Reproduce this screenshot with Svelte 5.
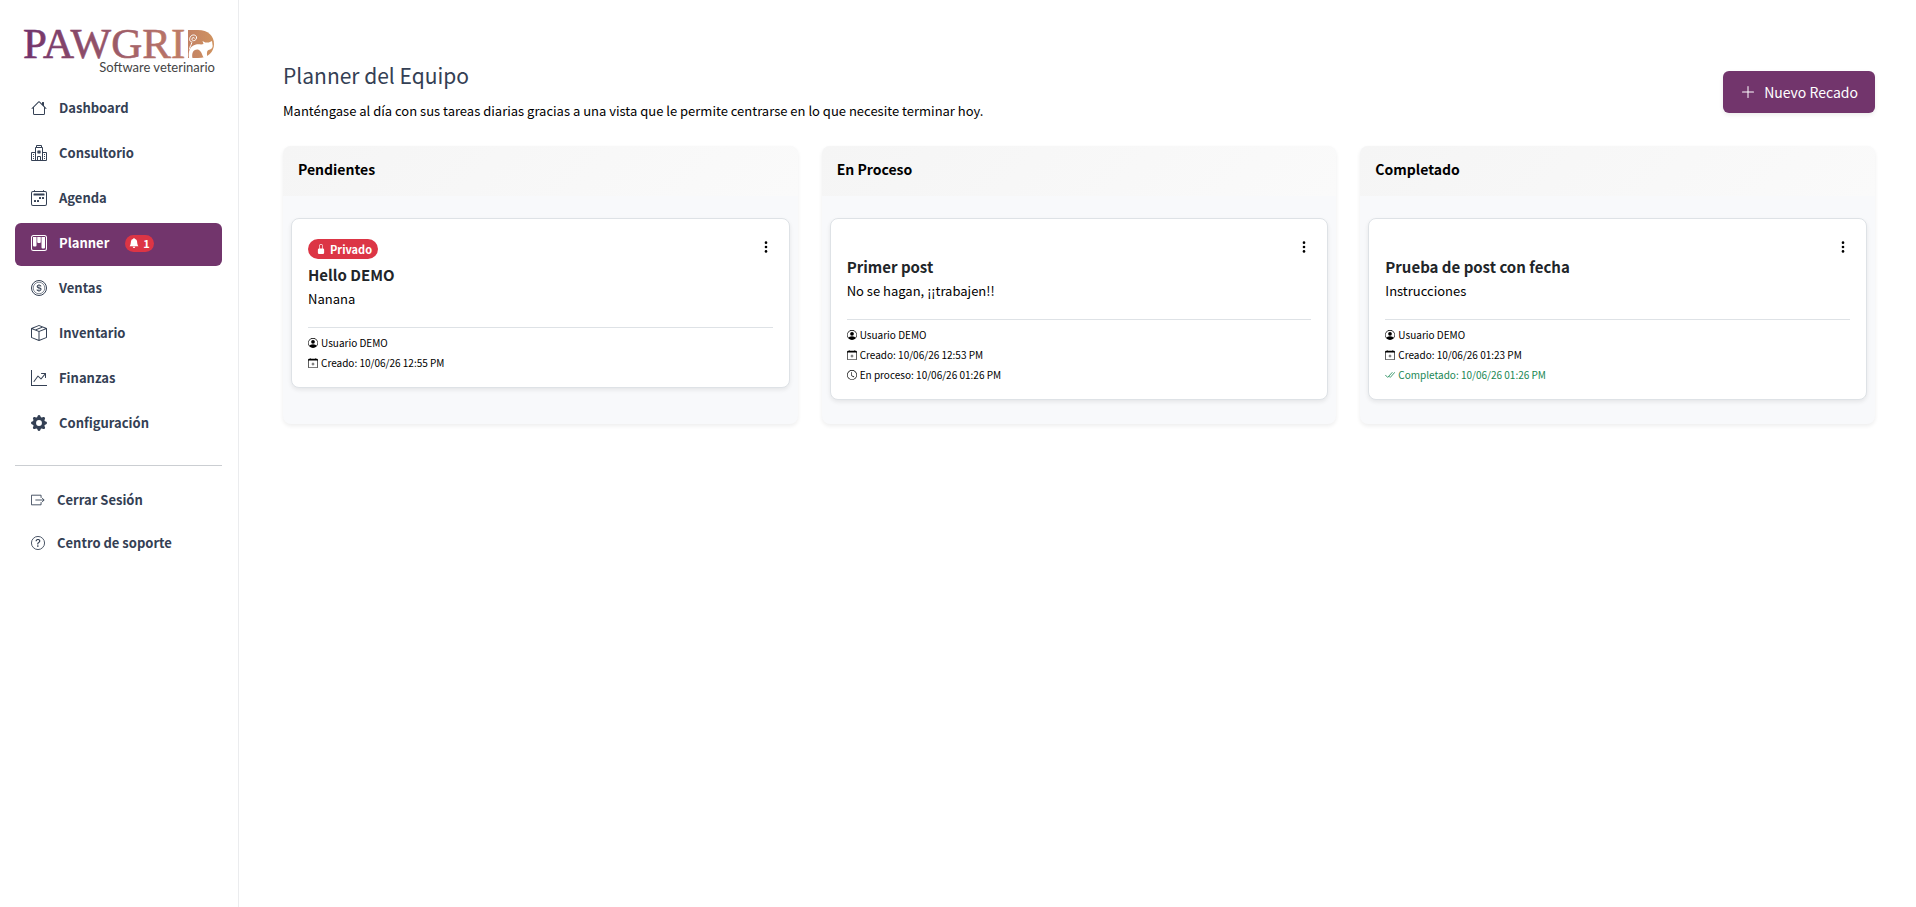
<script>
  const nav = [
    { label: 'Dashboard', icon: 'house' },
    { label: 'Consultorio', icon: 'hospital' },
    { label: 'Agenda', icon: 'week' },
    { label: 'Planner', icon: 'kanban', active: true, alerts: 1 },
    { label: 'Ventas', icon: 'coin' },
    { label: 'Inventario', icon: 'box' },
    { label: 'Finanzas', icon: 'graph' },
    { label: 'Configuración', icon: 'gear' }
  ];

  const links = [
    { label: 'Cerrar Sesión', icon: 'exit' },
    { label: 'Centro de soporte', icon: 'question' }
  ];

  const columns = [
    {
      title: 'Pendientes',
      card: {
        isPrivate: true,
        title: 'Hello DEMO',
        text: 'Nanana',
        meta: [
          { icon: 'person', text: 'Usuario DEMO' },
          { icon: 'plus-cal', text: 'Creado: 10/06/26 12:55 PM' }
        ]
      }
    },
    {
      title: 'En Proceso',
      card: {
        title: 'Primer post',
        text: 'No se hagan, ¡¡trabajen!!',
        meta: [
          { icon: 'person', text: 'Usuario DEMO' },
          { icon: 'plus-cal', text: 'Creado: 10/06/26 12:53 PM' },
          { icon: 'clock', text: 'En proceso: 10/06/26 01:26 PM' }
        ]
      }
    },
    {
      title: 'Completado',
      card: {
        title: 'Prueba de post con fecha',
        text: 'Instrucciones',
        meta: [
          { icon: 'person', text: 'Usuario DEMO' },
          { icon: 'plus-cal', text: 'Creado: 10/06/26 01:23 PM' },
          { icon: 'check', text: 'Completado: 10/06/26 01:26 PM', done: true }
        ]
      }
    }
  ];
</script>

{#snippet icon(name, size)}
  <svg class="icon" width={size} height={size} viewBox="0 0 16 16" fill="currentColor" aria-hidden="true">
    {#if name === 'house'}
      <path d="M8.707 1.5a1 1 0 0 0-1.414 0L.646 8.146a.5.5 0 0 0 .708.708L2 8.207V13.5A1.5 1.5 0 0 0 3.5 15h9a1.5 1.5 0 0 0 1.5-1.5V8.207l.646.647a.5.5 0 0 0 .708-.708L13 5.793V2.5a.5.5 0 0 0-.5-.5h-1a.5.5 0 0 0-.5.5v1.293zM13 7.207V13.5a.5.5 0 0 1-.5.5h-9a.5.5 0 0 1-.5-.5V7.207l5-5z" />
    {:else if name === 'hospital'}
      <path d="M8.5 5.034v1.1l.953-.55.5.867L9 7l.953.55-.5.866-.953-.55v1.1h-1v-1.1l-.953.55-.5-.866L7 7l-.953-.55.5-.866.953.55v-1.1zM13.25 9a.25.25 0 0 0-.25.25v.5c0 .138.112.25.25.25h.5a.25.25 0 0 0 .25-.25v-.5a.25.25 0 0 0-.25-.25zM13 11.25a.25.25 0 0 1 .25-.25h.5a.25.25 0 0 1 .25.25v.5a.25.25 0 0 1-.25.25h-.5a.25.25 0 0 1-.25-.25zm.25 1.75a.25.25 0 0 0-.25.25v.5c0 .138.112.25.25.25h.5a.25.25 0 0 0 .25-.25v-.5a.25.25 0 0 0-.25-.25zm-11-4a.25.25 0 0 0-.25.25v.5c0 .138.112.25.25.25h.5A.25.25 0 0 0 3 9.75v-.5A.25.25 0 0 0 2.75 9zm0 2a.25.25 0 0 0-.25.25v.5c0 .138.112.25.25.25h.5a.25.25 0 0 0 .25-.25v-.5a.25.25 0 0 0-.25-.25zM2 13.25a.25.25 0 0 1 .25-.25h.5a.25.25 0 0 1 .25.25v.5a.25.25 0 0 1-.25.25h-.5a.25.25 0 0 1-.25-.25z" />
      <path d="M5 1a1 1 0 0 1 1-1h4a1 1 0 0 1 1 1v1a1 1 0 0 1 1 1v4h3a1 1 0 0 1 1 1v7a1 1 0 0 1-1 1H1a1 1 0 0 1-1-1V8a1 1 0 0 1 1-1h3V3a1 1 0 0 1 1-1zm2 14h2v-3H7zm3 0h1V3H5v12h1v-3a1 1 0 0 1 1-1h2a1 1 0 0 1 1 1zm0-14H6v1h4zm2 7v7h3V8zm-8 7V8H1v7z" />
    {:else if name === 'week'}
      <path d="M3.5 0a.5.5 0 0 1 .5.5V1h8V.5a.5.5 0 0 1 1 0V1h1a2 2 0 0 1 2 2v11a2 2 0 0 1-2 2H2a2 2 0 0 1-2-2V3a2 2 0 0 1 2-2h1V.5a.5.5 0 0 1 .5-.5M2 2a1 1 0 0 0-1 1v11a1 1 0 0 0 1 1h12a1 1 0 0 0 1-1V3a1 1 0 0 0-1-1z" />
      <path d="M2.5 4a.5.5 0 0 1 .5-.5h10a.5.5 0 0 1 .5.5v1a.5.5 0 0 1-.5.5H3a.5.5 0 0 1-.5-.5zM11 7.5a.5.5 0 0 1 .5-.5h1a.5.5 0 0 1 .5.5v1a.5.5 0 0 1-.5.5h-1a.5.5 0 0 1-.5-.5zm-3 0a.5.5 0 0 1 .5-.5h1a.5.5 0 0 1 .5.5v1a.5.5 0 0 1-.5.5h-1a.5.5 0 0 1-.5-.5zm-5 3a.5.5 0 0 1 .5-.5h1a.5.5 0 0 1 .5.5v1a.5.5 0 0 1-.5.5h-1a.5.5 0 0 1-.5-.5zm3 0a.5.5 0 0 1 .5-.5h1a.5.5 0 0 1 .5.5v1a.5.5 0 0 1-.5.5h-1a.5.5 0 0 1-.5-.5z" />
    {:else if name === 'kanban'}
      <path fill-rule="evenodd" d="M2.5 0h11A2.5 2.5 0 0 1 16 2.5v11a2.5 2.5 0 0 1-2.5 2.5h-11A2.5 2.5 0 0 1 0 13.5v-11A2.5 2.5 0 0 1 2.5 0M2.5 1A1.5 1.5 0 0 0 1 2.5v11A1.5 1.5 0 0 0 2.5 15h11a1.5 1.5 0 0 0 1.5-1.5v-11A1.5 1.5 0 0 0 13.5 1z" />
      <path d="M2 2h3.500v8.500a1 1 0 0 1-1 1H3a1 1 0 0 1-1-1zM6.250 2h3.500v5a1 1 0 0 1-1 1h-1.500a1 1 0 0 1-1-1zM10.500 2H14v10.500a1 1 0 0 1-1 1h-1.500a1 1 0 0 1-1-1z" />
    {:else if name === 'coin'}
      <path d="M5.500 9.511c.076.954.83 1.697 2.182 1.785V12h.6v-.709c1.400-.098 2.218-.846 2.218-1.932 0-.987-.626-1.496-1.745-1.760l-.473-.112V5.570c.6.068.982.396 1.074.850h1.052c-.076-.919-.864-1.638-2.126-1.716V4h-.6v.719c-1.195.117-2.010.836-2.010 1.853 0 .9.606 1.472 1.613 1.707l.397.098v2.034c-.615-.093-1.022-.430-1.114-.900zm2.177-2.166c-.590-.137-.910-.416-.910-.836 0-.470.345-.822.915-.925v1.760h-.005zm.692 1.193c.717.166 1.048.435 1.048.910 0 .542-.412.914-1.135.982V8.518z" />
      <g fill="none" stroke="currentColor"><circle cx="8" cy="8" r="7.500" /><circle cx="8" cy="8" r="5.750" stroke-width=".6" /></g>
    {:else if name === 'box'}
      <path d="M8.186 1.113a.5.5 0 0 0-.372 0L1.846 3.500l2.404.961L10.404 2zm3.564 1.426L5.596 5 8 5.961 14.154 3.500zm3.250 1.700-6.500 2.600v7.922l6.500-2.600V4.240zM7.500 14.762V6.838L1 4.239v7.923zM7.443.184a1.500 1.500 0 0 1 1.114 0l7.129 2.852A.5.5 0 0 1 16 3.500v8.662a1 1 0 0 1-.629.928l-7.185 2.874a.5.5 0 0 1-.372 0L.630 13.090a1 1 0 0 1-.630-.928V3.500a.5.5 0 0 1 .314-.464z" />
    {:else if name === 'graph'}
      <path fill-rule="evenodd" d="M0 0h1v15h15v1H0zm10 3.500a.5.5 0 0 1 .5-.5h4a.5.5 0 0 1 .5.5v4a.5.5 0 0 1-1 0V4.900l-3.613 4.417a.5.5 0 0 1-.740.037L7.060 6.767l-3.656 5.027a.5.5 0 0 1-.808-.588l4-5.500a.5.5 0 0 1 .758-.060l2.609 2.610L13.445 4H10.500a.5.5 0 0 1-.5-.5" />
    {:else if name === 'gear'}
      <path d="M9.405 1.050c-.413-1.400-2.397-1.400-2.810 0l-.1.340a1.464 1.464 0 0 1-2.105.872l-.310-.170c-1.283-.698-2.686.705-1.987 1.987l.169.311c.446.820.023 1.841-.872 2.105l-.340.100c-1.400.413-1.400 2.397 0 2.810l.340.100a1.464 1.464 0 0 1 .872 2.105l-.170.310c-.698 1.283.705 2.686 1.987 1.987l.311-.169a1.464 1.464 0 0 1 2.105.872l.100.340c.413 1.400 2.397 1.400 2.810 0l.100-.340a1.464 1.464 0 0 1 2.105-.872l.310.170c1.283.698 2.686-.705 1.987-1.987l-.169-.311a1.464 1.464 0 0 1 .872-2.105l.340-.100c1.400-.413 1.400-2.397 0-2.810l-.340-.100a1.464 1.464 0 0 1-.872-2.105l.170-.310c.698-1.283-.705-2.686-1.987-1.987l-.311.169a1.464 1.464 0 0 1-2.105-.872zM8 10.930a2.929 2.929 0 1 1 0-5.860 2.929 2.929 0 0 1 0 5.858z" />
    {:else if name === 'exit'}
      <path fill="none" stroke="currentColor" d="M11.500 5.500V2.500H.5v11h11V10.500M5 8H15M12.500 5.500 15 8l-2.500 2.500" />
    {:else if name === 'question'}
      <circle cx="8" cy="8" r="7.500" fill="none" stroke="currentColor" />
      <path d="M5.255 5.786a.237.237 0 0 0 .241.247h.825c.138 0 .248-.113.266-.250.090-.656.540-1.134 1.342-1.134.686 0 1.314.343 1.314 1.168 0 .635-.374.927-.965 1.371-.673.489-1.206 1.060-1.168 1.987l.003.217a.25.25 0 0 0 .25.246h.811a.25.25 0 0 0 .25-.25v-.105c0-.718.273-.927 1.010-1.486.609-.463 1.244-.977 1.244-2.056 0-1.511-1.276-2.241-2.673-2.241-1.267 0-2.655.590-2.750 2.286m1.557 5.763c0 .533.425.927 1.010.927.609 0 1.028-.394 1.028-.927 0-.552-.420-.940-1.029-.940-.584 0-1.009.388-1.009.940" />
    {:else if name === 'bell'}
      <path d="M8 16a2 2 0 0 0 2-2H6a2 2 0 0 0 2 2m.995-14.901a1 1 0 1 0-1.990 0A5 5 0 0 0 3 6c0 1.098-.5 6-2 7h14c-1.500-1-2-5.902-2-7 0-2.420-1.720-4.440-4.005-4.901" />
    {:else if name === 'lock'}
      <path d="M8 1a2 2 0 0 1 2 2v4H6V3a2 2 0 0 1 2-2m3 6V3a3 3 0 0 0-6 0v4a2 2 0 0 0-2 2v5a2 2 0 0 0 2 2h6a2 2 0 0 0 2-2V9a2 2 0 0 0-2-2" />
    {:else if name === 'person'}
      <path d="M11 6a3 3 0 1 1-6 0 3 3 0 0 1 6 0" />
      <path fill-rule="evenodd" d="M0 8a8 8 0 1 1 16 0A8 8 0 0 1 0 8m8-7a7 7 0 0 0-5.468 11.370C3.242 11.226 4.805 10 8 10s4.757 1.225 5.468 2.370A7 7 0 0 0 8 1" />
    {:else if name === 'plus-cal'}
      <path d="M8 7a.5.5 0 0 1 .5.5V9H10a.5.5 0 0 1 0 1H8.500v1.500a.5.5 0 0 1-1 0V10H6a.5.5 0 0 1 0-1h1.500V7.500A.5.5 0 0 1 8 7" />
      <path d="M3.500 0a.5.5 0 0 1 .5.5V1h8V.5a.5.5 0 0 1 1 0V1h1a2 2 0 0 1 2 2v11a2 2 0 0 1-2 2H2a2 2 0 0 1-2-2V3a2 2 0 0 1 2-2h1V.5a.5.5 0 0 1 .5-.5M1 4v10a1 1 0 0 0 1 1h12a1 1 0 0 0 1-1V4z" />
    {:else if name === 'clock'}
      <path d="M8 3.500a.5.5 0 0 0-1 0V9a.5.5 0 0 0 .252.434l3.500 2a.5.5 0 0 0 .496-.868L8 8.710z" />
      <path d="M8 16A8 8 0 1 0 8 0a8 8 0 0 0 0 16m7-8A7 7 0 1 1 1 8a7 7 0 0 1 14 0" />
    {:else if name === 'check'}
      <path fill="none" stroke="currentColor" stroke-width="1.300" stroke-linecap="round" d="M.8 8.300 4.300 11.800 11.400 4M7.300 10.700 8.500 11.800 15.400 4" />
    {:else if name === 'plus'}
      <path d="M8 2a.5.5 0 0 1 .5.5v5h5a.5.5 0 0 1 0 1h-5v5a.5.5 0 0 1-1 0v-5h-5a.5.5 0 0 1 0-1h5v-5A.5.5 0 0 1 8 2" />
    {:else if name === 'dots'}
      <circle cx="8" cy="3" r="1.500" /><circle cx="8" cy="8" r="1.500" /><circle cx="8" cy="13" r="1.500" />
    {/if}
  </svg>
{/snippet}

<div class="app">
  <aside class="sidebar">
    <a class="logo" href="#inicio" aria-label="PAWGRID Software veterinario">
      <svg width="192" height="46" viewBox="0 0 192 46">
        <defs>
          <linearGradient id="brand" gradientUnits="userSpaceOnUse" x1="0" y1="0" x2="192" y2="0">
            <stop offset="0" stop-color="#70326c" />
            <stop offset=".45" stop-color="#985768" />
            <stop offset=".75" stop-color="#b87468" />
            <stop offset="1" stop-color="#d0935f" />
          </linearGradient>
        </defs>
        <text class="brand" x="0" y="29" fill="url(#brand)" stroke="url(#brand)" stroke-width=".6">PAWGRI</text>
        <path fill="url(#brand)" d="M165 1h10c10 0 16 6 16 14s-6 14-16 14h-10z" />
        <path fill="#fff" d="M166 29c-1-7 1-12 7-13.500 3-.7 5 .5 7.500-.5l-1-3 2.700 1.500h3.600L189 12l.7 5c0 2.500-2 3.600-4.200 4-2 1-1.700 4-1 8H181c-2-2-2-7-6-8.500-5-.5-6.500 4-5.500 8.500z" />
        <path fill="none" stroke="#fff" stroke-width="1" stroke-linecap="round" d="M166.500 20c.3-3 2-4 2.200-6M169 13c-3 0-3-4-1-6s6-1 5.500 2-4 3.500-4.500 1.500 2-2.500 2.500-1.500" />
        <text class="tagline" x="192" y="43" text-anchor="end">Software veterinario</text>
      </svg>
    </a>

    <nav class="menu">
      {#each nav as item}
        <a class="item" class:active={item.active} href="#{item.icon}">
          {@render icon(item.icon, 16)}
          <span>{item.label}</span>
          {#if item.alerts}
            <span class="badge alert">{@render icon('bell', 10)}{item.alerts}</span>
          {/if}
        </a>
      {/each}
    </nav>

    <hr class="divider" />

    <nav class="menu secondary">
      {#each links as item}
        <a class="item" href="#{item.icon}">
          {@render icon(item.icon, 14)}
          <span>{item.label}</span>
        </a>
      {/each}
    </nav>
  </aside>

  <main class="content">
    <header class="page-head">
      <div>
        <h1>Planner del Equipo</h1>
        <p>Manténgase al día con sus tareas diarias gracias a una vista que le permite centrarse en lo que necesite terminar hoy.</p>
      </div>
      <button class="primary" type="button">{@render icon('plus', 16)}Nuevo Recado</button>
    </header>

    <div class="board">
      {#each columns as column}
        <section class="column">
          <h2>{column.title}</h2>
          <div class="column-body">
            <article class="card">
              <div class="card-top">
                {#if column.card.isPrivate}
                  <span class="badge private">{@render icon('lock', 10)}Privado</span>
                {/if}
                <button class="more" type="button" aria-label="Opciones">{@render icon('dots', 14)}</button>
              </div>
              <h3>{column.card.title}</h3>
              <p>{column.card.text}</p>
              <ul>
                {#each column.card.meta as row}
                  <li class:done={row.done}>{@render icon(row.icon, 10)}{row.text}</li>
                {/each}
              </ul>
            </article>
          </div>
        </section>
      {/each}
    </div>
  </main>
</div>

<style>
  :global(body) {
    margin: 0;
    background: #fff;
  }

  .app {
    display: flex;
    min-height: 100vh;
    font-family: 'Noto Sans CJK SC', 'Noto Sans', sans-serif;
    font-size: 13px;
    line-height: 20px;
    color: #000;
  }

  .icon {
    display: block;
    flex: none;
  }

  .sidebar {
    box-sizing: border-box;
    flex: none;
    width: 239px;
    padding: 29px 16px 0 15px;
    border-right: 1px solid #ebecee;
  }

  .logo {
    display: block;
    margin: 0 0 13px 8px;
  }

  .logo svg {
    display: block;
    overflow: visible;
  }

  .brand {
    font-family: 'Liberation Serif', serif;
    font-size: 43px;
  }

  .tagline {
    font-family: Lato, sans-serif;
    font-size: 13px;
    fill: #444;
  }

  .menu {
    display: flex;
    flex-direction: column;
    gap: 2px;
  }

  .item {
    box-sizing: border-box;
    display: flex;
    align-items: center;
    gap: 12px;
    height: 43px;
    padding: 0 16px 3px;
    border-radius: 6px;
    color: #344054;
    font-weight: 700;
    text-decoration: none;
  }

  .item.active {
    background: #72356c;
    color: #fff;
  }

  .secondary {
    gap: 0;
  }

  .divider {
    height: 1px;
    margin: 19px 0 14px;
    border: 0;
    background: #cbced2;
  }

  .badge {
    display: inline-flex;
    align-items: center;
    gap: 4px;
    border-radius: 10px;
    background: #dc3545;
    color: #fff;
    font-size: 11px;
    font-weight: 700;
  }

  .alert {
    height: 17px;
    margin-left: 4px;
    padding: 0 4px;
  }

  .private {
    height: 20px;
    margin: 4px 0;
    padding: 0 6px 0 8px;
  }

  .content {
    flex: 1;
    min-width: 0;
    padding: 60px 41px 0 44px;
  }

  .page-head {
    display: flex;
    align-items: flex-end;
    justify-content: space-between;
    margin-bottom: 25px;
  }

  h1,
  h2,
  h3,
  p,
  ul {
    margin: 0;
  }

  h1 {
    margin-bottom: 11px;
    color: #344054;
    font-size: 21px;
    font-weight: 400;
    line-height: 30px;
  }

  .primary {
    display: flex;
    align-items: center;
    gap: 8px;
    height: 42px;
    margin-bottom: 8px;
    padding: 0 17px;
    border: 0;
    border-radius: 6px;
    background: #72356c;
    box-shadow: 0 2px 4px rgb(0 0 0 / 8%);
    color: #fff;
    font: inherit;
    font-size: 14px;
  }

  .board {
    display: grid;
    grid-template-columns: repeat(3, minmax(0, 1fr));
    gap: 24px;
  }

  .column {
    overflow: hidden;
    border-radius: 8px;
    background: #f8f9fb;
    box-shadow: 0 2px 4px rgb(0 0 0 / 7%);
  }

  h2 {
    padding: 12px 15px 16px;
    background: linear-gradient(135deg, #f5f5f5, #fafafa);
    font-size: 14px;
    font-weight: 700;
    line-height: 22px;
  }

  .column-body {
    padding: 22px 8px 24px;
  }

  .card {
    padding: 16px 16px 14px;
    border: 1px solid #dee2e6;
    border-radius: 8px;
    background: #fff;
    box-shadow: 0 2px 4px rgb(0 0 0 / 8%);
  }

  .card-top {
    display: flex;
    align-items: flex-start;
    min-height: 20px;
  }

  .more {
    margin: 5px 0 0 auto;
    padding: 0;
    border: 0;
    background: none;
    color: #000;
  }

  h3 {
    margin-bottom: 2px;
    color: #212529;
    font-size: 15px;
    font-weight: 700;
    line-height: 24px;
  }

  .card p {
    margin-bottom: 18px;
  }

  ul {
    padding: 5px 0 0;
    border-top: 1px solid #dee2e6;
    list-style: none;
  }

  li {
    display: flex;
    align-items: center;
    gap: 3px;
    font-size: 10px;
  }

  .done {
    color: #198754;
  }
</style>
